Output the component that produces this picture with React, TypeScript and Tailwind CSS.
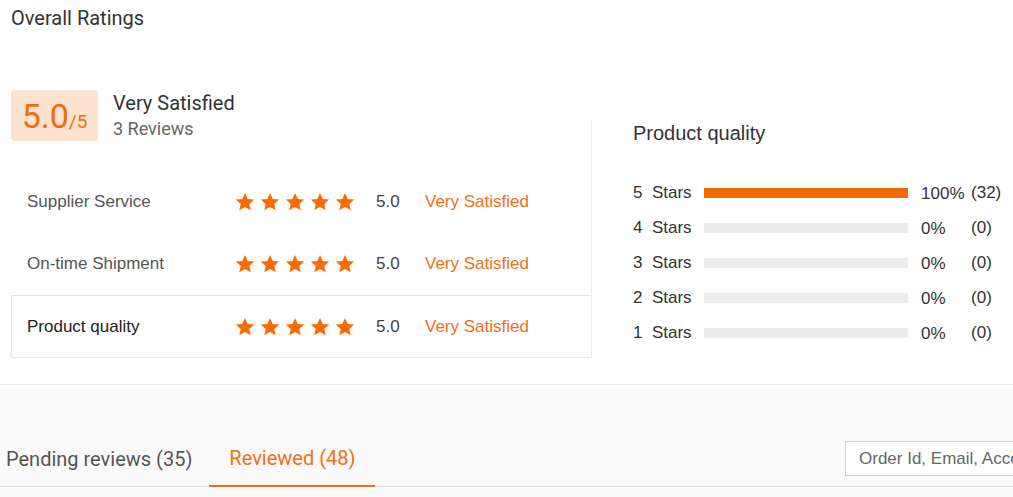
import React from "react";

const Star = () => (
  <svg width="20" height="20" viewBox="0 0 24 24" className="block">
    <path
      d="M12 1.2l3.2 7.2 7.8.7-5.9 5.2 1.8 7.7L12 18.1 5.1 22l1.8-7.7L1 9.1l7.8-.7z"
      fill="#ff6a00"
    />
  </svg>
);

const Stars = () => (
  <div className="flex gap-[5px]">
    {[0, 1, 2, 3, 4].map((i) => (
      <Star key={i} />
    ))}
  </div>
);

const rows = [
  { label: "Supplier Service", selected: false },
  { label: "On-time Shipment", selected: false },
  { label: "Product quality", selected: true },
];

const dist = [
  { label: "5", pct: 100, count: 32 },
  { label: "4", pct: 0, count: 0 },
  { label: "3", pct: 0, count: 0 },
  { label: "2", pct: 0, count: 0 },
  { label: "1", pct: 0, count: 0 },
];

const roboto = { fontFamily: "Roboto, 'Liberation Sans', Arial, sans-serif" };
const arial = { fontFamily: "'Liberation Sans', Arial, sans-serif" };

export default function App() {
  return (
    <div className="w-[1013px] h-[497px] overflow-hidden bg-white flex flex-col" style={roboto}>
      <div className="pl-[11px] pt-[5px] text-[20px] leading-[26px] text-[#333]">
        Overall Ratings
      </div>

      <div className="flex mt-[59px]">
        {/* left column */}
        <div className="w-[591px] pl-[11px] flex flex-col shrink-0">
          <div className="flex items-start">
            <div className="w-[87px] h-[51px] rounded-[4px] bg-[#fde3cf] flex items-center justify-center">
              <span className="text-[34px] leading-none text-[#f26b12]">5.0</span>
              <span className="text-[19px] leading-none text-[#f26b12] mt-[12px]">/5</span>
            </div>
            <div className="ml-[15px] flex flex-col">
              <div className="text-[20px] leading-[26px] text-[#333]">Very Satisfied</div>
              <div className="text-[18px] leading-[24px] text-[#666] mt-[1px]">3 Reviews</div>
            </div>
          </div>

          <div className="mt-[30px] flex flex-col" style={arial}>
            {rows.map((r) => (
              <div
                key={r.label}
                className={
                  r.selected
                    ? "h-[63px] flex items-center pl-[15px] border-t border-l border-b border-[#e6e6e6] text-[#222]"
                    : "h-[62px] flex items-center pl-[16px] text-[#555]"
                }
              >
                <div className="w-[208px] text-[17px]">{r.label}</div>
                <Stars />
                <div className="ml-[21px] w-[49px] text-[17px] text-[#444]">5.0</div>
                <div className="text-[17px] text-[#f07016]">Very Satisfied</div>
              </div>
            ))}
          </div>
        </div>

        {/* right column */}
        <div className="mt-[30px] border-l border-[#ececec] pl-[41px] flex flex-col" style={arial}>
          <div className="pt-[1px] text-[20px] leading-[24px] text-[#333]">Product quality</div>
          <div className="mt-[30px] flex flex-col">
            {dist.map((d) => (
              <div key={d.label} className="h-[35px] flex items-center text-[17px] text-[#333]">
                <div className="w-[71px] whitespace-nowrap">
                  {d.label}&nbsp; Stars
                </div>
                <div className="w-[204px] h-[10px] bg-[#ebecee]">
                  <div className="h-full bg-[#f56a00]" style={{ width: `${d.pct}%` }} />
                </div>
                <div className="ml-[13px] w-[50px] mt-[2px]">{d.pct}%</div>
                <div>({d.count})</div>
              </div>
            ))}
          </div>
        </div>
      </div>

      <div className="mt-[26px] border-t border-[#ececec] bg-[#fafafa] flex-1 flex flex-col">
        <div className="mt-[46px] flex items-stretch border-b border-[#e2e2e2] h-[56px]">
          <div className="pl-[6px] pr-[17px] flex items-center text-[20px] text-[#555]">
            Pending reviews (35)
          </div>
          <div className="px-[20px] flex items-center text-[20px] text-[#f07016] border-b-2 border-[#f07016] mb-[-1px]">
            Reviewed (48)
          </div>
          <div className="flex-1" />
          <div className="flex items-center">
            <div
              className="w-[168px] h-[35px] bg-white border-l border-t border-b border-[#cfcfcf] flex items-center pl-[13px] text-[17px] text-[#666] whitespace-nowrap overflow-hidden"
              style={arial}
            >
              Order Id, Email, Account
            </div>
          </div>
        </div>
      </div>
    </div>
  );
}
